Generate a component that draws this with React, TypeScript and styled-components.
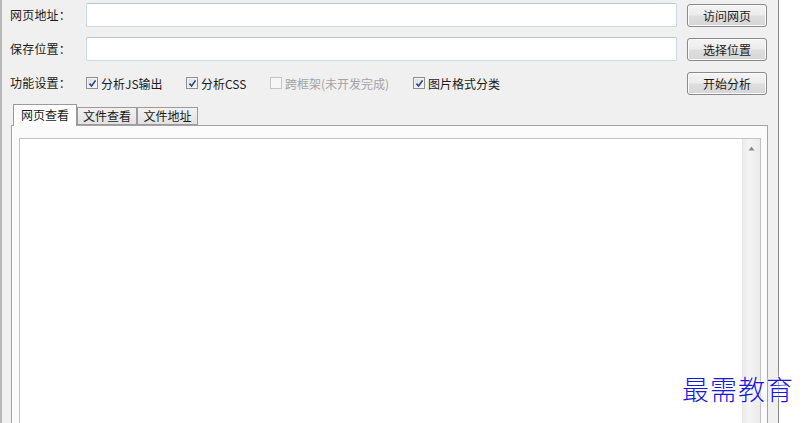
import React from "react";
import styled, { createGlobalStyle } from "styled-components";

const Global = createGlobalStyle`
  html, body { margin: 0; padding: 0; background: #ffffff; }
  body { font-family: "Noto Sans CJK SC", "Noto Sans", sans-serif; }
`;

const Screen = styled.div`
  position: relative;
  width: 803px;
  height: 423px;
  overflow: hidden;
  display: flex;
  background: #ffffff;
`;

const Window = styled.div`
  width: 776px;
  height: 423px;
  background: #f0f0f0;
  border-left: 2px solid #b8b8b8;
  border-right: 1px solid #8a8a8a;
  box-sizing: content-box;
  display: flex;
  flex-direction: column;
  padding: 3px 0 0 0;
`;

const Form = styled.div`
  display: flex;
  flex-direction: column;
  gap: 10px;
  padding: 0 11px 0 8px;
`;

const Row = styled.div`
  display: grid;
  grid-template-columns: 66px 1fr 80px;
  column-gap: 10px;
  height: 24px;
  align-items: center;
`;

const Label = styled.span`
  font-size: 12px;
  color: #1a1a1a;
  line-height: 24px;
  white-space: nowrap;
  letter-spacing: 0.2px;
`;

const Input = styled.div`
  height: 24px;
  box-sizing: border-box;
  background: #ffffff;
  border: 1px solid #c9dbe8;
  border-top-color: #b4c8d8;
  border-radius: 2px;
`;

const Button = styled.button`
  height: 23px;
  width: 80px;
  padding: 0;
  box-sizing: border-box;
  border: 1px solid #8a8a8a;
  border-radius: 3px;
  background: linear-gradient(#f4f4f4 0%, #ececec 48%, #dedede 52%, #d6d6d6 100%);
  box-shadow: inset 0 0 0 1px #fbfbfb;
  font-family: "Noto Sans CJK SC", sans-serif;
  font-size: 12px;
  color: #1a1a1a;
  line-height: 21px;
  align-self: end;
`;

const Options = styled.div`
  display: flex;
  align-items: center;
  height: 24px;
`;

const Option = styled.label<{ $w: number; $disabled?: boolean }>`
  display: flex;
  align-items: center;
  gap: 3px;
  width: ${(p) => p.$w}px;
  font-size: 12px;
  color: ${(p) => (p.$disabled ? "#a3a3a3" : "#1a1a1a")};
  white-space: nowrap;
`;

const Box = styled.span<{ $disabled?: boolean }>`
  display: inline-flex;
  align-items: center;
  justify-content: center;
  width: 12px;
  height: 12px;
  box-sizing: border-box;
  border: 1px solid ${(p) => (p.$disabled ? "#c4c4c4" : "#8e8f8f")};
  background: ${(p) =>
    p.$disabled ? "#f6f6f6" : "linear-gradient(135deg, #dcdcdc, #f8f8f8)"};
  box-shadow: inset 0 0 0 1px ${(p) => (p.$disabled ? "#f6f6f6" : "#f2f2f2")};
`;

const Check = () => (
  <svg width="9" height="9" viewBox="0 0 9 9">
    <path d="M1.5 4.6 L3.6 7 L7.6 1.4" fill="none" stroke="#22438f" strokeWidth="1.6" />
  </svg>
);

const Tabs = styled.div`
  margin-top: 8px;
  padding-left: 9px;
  display: flex;
  flex-direction: column;
  flex: 1;
`;

const TabStrip = styled.div`
  display: flex;
  align-items: flex-end;
  height: 22px;
  padding-left: 4px;
  position: relative;
  z-index: 1;
`;

const Tab = styled.div<{ $active?: boolean; $w: number }>`
  width: ${(p) => p.$w}px;
  box-sizing: border-box;
  height: ${(p) => (p.$active ? 22 : 18)}px;
  margin: ${(p) => (p.$active ? "0 0 -1px -2px" : "0")};
  border: 1px solid #9a9a9a;
  border-bottom: ${(p) => (p.$active ? "none" : "1px solid #9a9a9a")};
  background: ${(p) => (p.$active ? "#ffffff" : "linear-gradient(#f2f2f2, #e2e2e2)")};
  font-size: 12px;
  color: #1a1a1a;
  text-align: center;
  line-height: ${(p) => (p.$active ? 20 : 16)}px;
  white-space: nowrap;
  position: relative;
  z-index: ${(p) => (p.$active ? 2 : 1)};
`;

const Panel = styled.div`
  flex: 1;
  width: 757px;
  box-sizing: border-box;
  border: 1px solid #a4a4a4;
  background: #fbfbfb;
  padding: 12px 6px 0 7px;
  display: flex;
`;

const TextArea = styled.div`
  flex: 1;
  border: 1px solid #c2c2c2;
  border-bottom: none;
  background: #ffffff;
  display: flex;
  justify-content: flex-end;
`;

const ScrollBar = styled.div`
  width: 17px;
  background: linear-gradient(90deg, #ececec, #f4f4f4 40%, #eaeaea);
  border-left: 1px solid #e6e6e6;
  display: flex;
  justify-content: center;
  padding-top: 7px;
`;

const Arrow = () => (
  <svg width="7" height="5" viewBox="0 0 7 5">
    <path d="M3.5 0.5 L6.5 4.5 L0.5 4.5 Z" fill="#8a8a8a" />
  </svg>
);

const Watermark = styled.div`
  position: absolute;
  left: 682px;
  top: 372px;
  font-family: "Noto Sans CJK SC", sans-serif;
  font-size: 27px;
  font-weight: 300;
  letter-spacing: 1px;
  color: #1818e0;
  line-height: 34px;
  text-shadow: 0 0 2px #fff, 0 0 2px #fff, 0 0 3px #fff;
`;

export default function App() {
  return (
    <>
      <Global />
      <Screen>
        <Window>
          <Form>
            <Row>
              <Label>网页地址：</Label>
              <Input />
              <Button>访问网页</Button>
            </Row>
            <Row>
              <Label>保存位置：</Label>
              <Input />
              <Button>选择位置</Button>
            </Row>
            <Row>
              <Label>功能设置：</Label>
              <Options>
                <Option $w={100}>
                  <Box><Check /></Box>分析JS输出
                </Option>
                <Option $w={84}>
                  <Box><Check /></Box>分析CSS
                </Option>
                <Option $w={143} $disabled>
                  <Box $disabled />跨框架(未开发完成)
                </Option>
                <Option $w={120}>
                  <Box><Check /></Box>图片格式分类
                </Option>
              </Options>
              <Button>开始分析</Button>
            </Row>
          </Form>
          <Tabs>
            <TabStrip>
              <Tab $active $w={64}>网页查看</Tab>
              <Tab $w={60}>文件查看</Tab>
              <Tab $w={61}>文件地址</Tab>
            </TabStrip>
            <Panel>
              <TextArea>
                <ScrollBar>
                  <Arrow />
                </ScrollBar>
              </TextArea>
            </Panel>
          </Tabs>
        </Window>
        <Watermark>最需教育</Watermark>
      </Screen>
    </>
  );
}
